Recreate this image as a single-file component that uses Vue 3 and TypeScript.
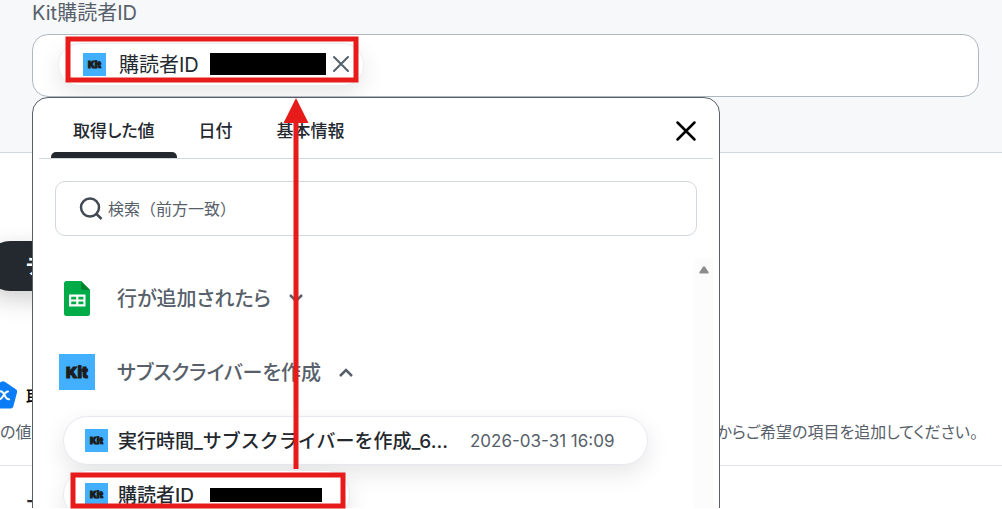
<script setup lang="ts">
import { ref } from 'vue'

interface Tab {
  id: string
  label: string
}

const tabs: Tab[] = [
  { id: 'values', label: '取得した値' },
  { id: 'date', label: '日付' },
  { id: 'basic', label: '基本情報' },
]

const activeTab = ref('values')
const query = ref('')
</script>

<template>
  <div class="frame">
    <div class="page">
      <section class="editor">
        <p id="field-label" class="field-label">Kit購読者ID</p>
        <div class="field-wrap">
          <div class="field" role="group" aria-labelledby="field-label">
            <div class="token">
              <span class="kit small"><span class="kit-word">Kit</span></span>
              <span class="token-name">購読者ID</span>
              <span class="redacted large"></span>
              <button class="icon-button token-remove" type="button" aria-label="削除">
                <svg width="18" height="18" viewBox="0 0 18 18"><path d="M2 2 16 16M16 2 2 16" /></svg>
              </button>
            </div>
          </div>

          <div class="popup">
            <header class="popup-head">
              <nav class="tabs" role="tablist">
                <button
                  v-for="tab in tabs"
                  :key="tab.id"
                  type="button"
                  role="tab"
                  class="tab"
                  :class="{ active: tab.id === activeTab }"
                  :aria-selected="tab.id === activeTab"
                  @click="activeTab = tab.id"
                >
                  {{ tab.label }}
                </button>
              </nav>
              <button class="icon-button close" type="button" aria-label="閉じる">
                <svg width="22" height="22" viewBox="0 0 22 22"><path d="M2.5 2.5 19.5 19.5M19.5 2.5 2.5 19.5" /></svg>
              </button>
            </header>

            <label class="search">
              <svg class="lens" width="24" height="24" viewBox="0 0 24 24">
                <circle cx="11" cy="10.500" r="9" />
                <path d="m17 16.500 5.500 5.500" />
              </svg>
              <input v-model="query" type="text" aria-label="検索" placeholder="検索（前方一致）" />
            </label>

            <div class="list">
              <div class="groups">
                <button class="group" type="button">
                  <span class="group-icon">
                    <svg width="26" height="35" viewBox="0 0 26 35">
                      <path fill="#00ac47" d="M2.500 0H17l9 9v23.500a2.500 2.500 0 0 1-2.500 2.500h-21A2.500 2.500 0 0 1 0 32.500v-30A2.500 2.500 0 0 1 2.500 0Z" />
                      <path fill="#00832d" d="M17 0v7a2 2 0 0 0 2 2h7Z" />
                      <path fill="#fff" fill-rule="evenodd" d="M5 13.500h16.500v12H5Zm2.200 2.200v2.700h5v-2.700Zm7.200 0v2.700h5v-2.700Zm-7.200 4.800v2.800h5v-2.800Zm7.200 0v2.800h5v-2.800Z" />
                    </svg>
                  </span>
                  <span class="group-name">行が追加されたら</span>
                  <svg class="chevron" width="16" height="16" viewBox="0 0 16 16"><path d="m2 5 6 6 6-6" /></svg>
                </button>
                <button class="group" type="button">
                  <span class="group-icon"><span class="kit"><span class="kit-word">Kit</span></span></span>
                  <span class="group-name">サブスクライバーを作成</span>
                  <svg class="chevron" width="16" height="16" viewBox="0 0 16 16"><path d="m2 12 6-6 6 6" /></svg>
                </button>
                <div class="values">
                  <button class="value wide" type="button">
                    <span class="kit small"><span class="kit-word">Kit</span></span>
                    <span class="value-name">実行時間_サブスクライバーを作成_6...</span>
                    <span class="value-data">2026-03-31 16:09</span>
                  </button>
                  <button class="value narrow" type="button">
                    <span class="kit small"><span class="kit-word">Kit</span></span>
                    <span class="value-name">購読者ID</span>
                    <span class="redacted"></span>
                  </button>
                </div>
              </div>
              <div class="scrollbar">
                <svg width="10" height="8" viewBox="0 0 10 8"><path d="M4 .8Q5-.4 6 .8L9.500 6Q10 7.500 8.500 7.500h-7Q0 7.500.5 6Z" /></svg>
              </div>
            </div>
          </div>
        </div>
      </section>

      <section class="below">
        <button class="test-button" type="button">テスト</button>
        <h2 class="heading">
          <svg width="30" height="28" viewBox="0 0 30 28">
            <path fill="#0a7cf5" d="M13.200.8q1.800-1.200 3.600 0l11 7.400q1.800 1.200 1.200 3.200l-3.700 14q-.6 2-2.500 2H7.200q-1.900 0-2.500-2L1 11.400q-.6-2 1.200-3.200Z" />
            <path class="mark" d="M12 10.500c4-2 5 9 9 7.800M20 10.500c-4 0-5 8-9 8" />
          </svg>
          取得した値
        </h2>
        <div class="description">
          <span>の値</span>
          <span>からご希望の項目を追加してください。</span>
        </div>
        <p class="next">ア</p>
      </section>
    </div>

    <svg class="annotation" width="380" height="509" viewBox="0 0 380 509" aria-hidden="true">
      <rect x="68" y="39" width="288" height="41" />
      <rect x="73" y="475" width="270" height="31" />
      <path class="shaft" d="M296 469V120" />
      <path class="head" d="m296 98 12.500 25h-25Z" />
    </svg>
  </div>
</template>

<style>
body {
  margin: 0;
  background: #fff;
}
</style>

<style scoped>
.frame {
  position: relative;
  font-family: Inter, "Noto Sans CJK JP", sans-serif;
  font-feature-settings: "palt";
  color: #24292f;
}

.page {
  box-sizing: border-box;
  height: 100vh;
  overflow: hidden;
  border-bottom: 1px solid #fff;
}

button {
  font: inherit;
  font-feature-settings: inherit;
  color: inherit;
  border: 0;
  padding: 0;
  background: none;
  cursor: pointer;
}

svg {
  display: block;
  flex: none;
}

.editor {
  box-sizing: border-box;
  height: 153px;
  padding: 0 23px 0 32px;
  background: #f6f8fa;
  border-bottom: 1px solid #d0d7de;
}

.field-label {
  margin: 0;
  height: 34px;
  font-size: 20px;
  line-height: 26px;
  color: #57606a;
}

.field-wrap {
  position: relative;
}

.field {
  box-sizing: border-box;
  height: 63px;
  display: flex;
  align-items: center;
  padding: 0 25px 3px;
  overflow: hidden;
  background: #fff;
  border: 1px solid #afb8c1;
  border-radius: 16px;
}

.token {
  box-sizing: border-box;
  display: flex;
  align-items: center;
  height: 43px;
  padding: 0 13px 0 24px;
  font-size: 20px;
  border: 1px solid #eaeef2;
  border-radius: 24px;
  background: #fff;
  box-shadow: 0 8px 24px rgba(0, 0, 0, 0.1);
}

.token-name {
  width: 91px;
  margin-left: 13px;
  padding-bottom: 2px;
}

.token-remove {
  margin-left: 6px;
}

.token-remove path {
  stroke: #57606a;
  stroke-width: 2;
}

.icon-button path {
  fill: none;
  stroke-linecap: round;
}

.redacted {
  width: 112px;
  height: 14px;
  background: #000;
}

.redacted.large {
  width: 116px;
  height: 22px;
}

.kit {
  display: flex;
  align-items: center;
  justify-content: center;
  flex: none;
  width: 36px;
  height: 36px;
  background: #43afff;
  color: #1c1c1c;
  font-size: 15px;
  font-weight: 900;
  line-height: 1;
}

.kit-word {
  -webkit-text-stroke: 1px #1c1c1c;
}

.kit.small {
  width: 23px;
  height: 23px;
  font-size: 9px;
}

.popup {
  position: absolute;
  z-index: 2;
  top: 63px;
  left: 0;
  box-sizing: border-box;
  width: 688px;
  max-width: 100%;
  height: 480px;
  padding: 0 6px;
  overflow: hidden;
  background: #fff;
  border: 1px solid #57606a;
  border-radius: 16px;
}

.popup-head {
  display: flex;
  align-items: center;
  justify-content: space-between;
  height: 60px;
  padding: 0 16px 0 12px;
  border-bottom: 1px solid #d0d7de;
}

.tabs {
  display: flex;
  height: 100%;
}

.tab {
  display: flex;
  flex-direction: column;
  justify-content: center;
  position: relative;
  padding: 6px 22px 0;
  font-size: 17px;
  font-weight: 500;
  line-height: 24px;
}

.tab.active::after {
  content: "";
  position: absolute;
  left: 0;
  right: 0;
  bottom: 0;
  height: 6px;
  border-radius: 5px 5px 0 0;
  background: #24292f;
}

.close {
  margin-top: 6px;
}

.close path {
  stroke: #000;
  stroke-width: 2.500;
}

.search {
  display: flex;
  align-items: center;
  box-sizing: border-box;
  height: 55px;
  margin: 22px 16px;
  padding: 0 23px;
  border: 1px solid #d0d7de;
  border-radius: 10px;
}

.lens {
  fill: none;
  stroke: #424a53;
  stroke-width: 2.500;
}

.search input {
  flex: 1;
  min-width: 0;
  margin-left: 5px;
  padding: 0;
  border: 0;
  outline: 0;
  background: none;
  font: 16px/24px Inter, "Noto Sans CJK JP", sans-serif;
  color: #24292f;
}

.search input::placeholder {
  color: #57606a;
  opacity: 1;
}

.list {
  display: flex;
  height: 300px;
}

.groups {
  flex: 1;
  padding-top: 3px;
}

.group {
  display: flex;
  align-items: center;
  height: 74px;
  padding-left: 19px;
  font-size: 20px;
  font-weight: 500;
  color: #57606a;
}

.group-icon {
  display: flex;
  justify-content: center;
  width: 38px;
  margin-right: 21px;
}

.group-name {
  padding-bottom: 2px;
}

.chevron {
  margin-left: 17px;
  fill: none;
  stroke: #57606a;
  stroke-width: 2.500;
}

.values {
  display: flex;
  flex-direction: column;
  align-items: flex-start;
  gap: 5px;
  height: 140px;
  padding: 7px 0 0 24px;
  overflow: hidden;
}

.value {
  box-sizing: border-box;
  display: flex;
  align-items: center;
  flex: none;
  height: 49px;
  padding: 0 32px 0 21px;
  font-size: 19px;
  font-weight: 500;
  font-feature-settings: normal;
  border: 1px solid #e6eaf0;
  border-radius: 25px;
  background: #fff;
  box-shadow: 0 8px 24px rgba(0, 0, 0, 0.1);
}

.value.narrow {
  padding-right: 27px;
}

.value-name {
  margin-left: 10px;
  padding-bottom: 2px;
}

.value.narrow .value-name {
  width: 92px;
  text-align: left;
}

.value-data {
  margin-left: 22px;
  font-size: 17px;
  font-weight: 400;
  color: #57606a;
}

.scrollbar {
  width: 19px;
  display: flex;
  justify-content: center;
  align-items: flex-start;
  padding-top: 8px;
  box-sizing: border-box;
  background: #fcfcfc;
  fill: #8b8b8b;
}

.below {
  padding-top: 88px;
}

.test-button {
  display: block;
  width: 160px;
  height: 50px;
  margin-left: -15px;
  padding: 0 0 2px 41px;
  border-radius: 25px;
  background: #24292f;
  color: #fff;
  font-size: 20px;
  font-weight: 600;
  text-align: left;
  box-shadow: 0 8px 24px rgba(0, 0, 0, 0.2);
}

.heading {
  display: flex;
  align-items: center;
  gap: 8px;
  height: 28px;
  margin: 90px 0 0 -12px;
  font-size: 17px;
  font-weight: 500;
  color: #000;
}

.mark {
  fill: none;
  stroke: #fff;
  stroke-width: 2;
  stroke-linecap: round;
}

.description {
  display: flex;
  justify-content: space-between;
  box-sizing: border-box;
  height: 57px;
  padding: 11px 24px 0 0;
  border-bottom: 1px solid #e1e4e8;
  font-size: 16px;
  line-height: 24px;
  color: #57606a;
}

.next {
  margin: 28px 0 0 26px;
  font-size: 18px;
  font-weight: 600;
  line-height: 28px;
}

.annotation {
  position: absolute;
  z-index: 3;
  top: 0;
  left: 0;
  fill: none;
  stroke: #e81b1b;
  stroke-width: 5;
  pointer-events: none;
}

.annotation .head {
  fill: #e81b1b;
  stroke: none;
}
</style>
